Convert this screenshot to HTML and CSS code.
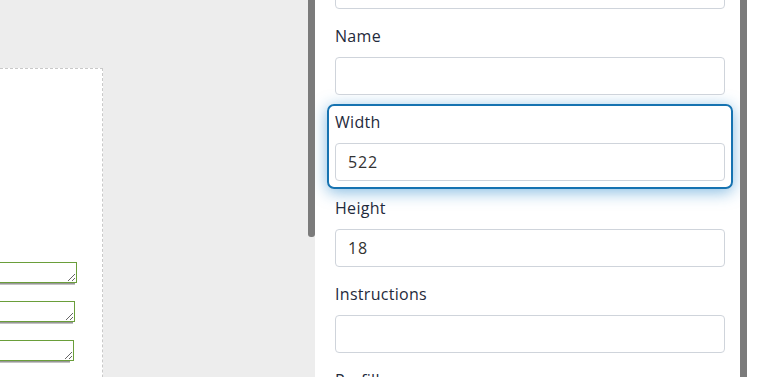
FILE: index.html
```html
<!DOCTYPE html>
<html lang="en">
<head>
    <meta charset="UTF-8">
    <meta name="viewport" content="width=device-width, initial-scale=1.0">
    <title>Form Builder - Field Settings</title>
    <link rel="stylesheet" href="styles.css">
</head>
<body>

    <!-- Canvas -->
    <div class="stage">
        <div class="page">
            <div class="field-row row-1">
                <textarea class="box"></textarea>
                <div class="box-line"></div>
            </div>
            <div class="field-row row-2">
                <textarea class="box"></textarea>
                <div class="box-line"></div>
            </div>
            <div class="field-row row-3">
                <textarea class="box"></textarea>
                <div class="box-line"></div>
            </div>
        </div>
    </div>
    <div class="stage-bar">
        <div class="stage-thumb"></div>
    </div>

    <!-- Settings Panel -->
    <div class="panel">
        <div class="fields">
            <div class="group">
                <label class="label">Label</label>
                <input type="text" class="input" value="">
            </div>
            <div class="group">
                <label class="label">Name</label>
                <input type="text" class="input" value="">
            </div>
            <div class="group active">
                <label class="label">Width</label>
                <input type="text" class="input" value="522">
            </div>
            <div class="group">
                <label class="label">Height</label>
                <input type="text" class="input" value="18">
            </div>
            <div class="group">
                <label class="label">Instructions</label>
                <input type="text" class="input" value="">
            </div>
            <div class="group">
                <label class="label">Prefill</label>
                <input type="text" class="input" value="">
            </div>
        </div>
    </div>
    <div class="panel-bar"></div>
    <div class="rest"></div>

</body>
</html>
```

FILE: styles.css
```css
/* Global Styles */
* {
    margin: 0;
    padding: 0;
    box-sizing: border-box;
}

body {
    font-family: "Open Sans", Arial, sans-serif;
    background-color: #ededed;
    display: flex;
    height: 377px;
    overflow: hidden;
}

/* Canvas */
.stage {
    width: 308px;
    flex: none;
    overflow: hidden;
}

.page {
    margin-top: 68px;
    margin-left: -200px;
    width: 303px;
    height: 400px;
    background-color: #fff;
    border-top: 1px dashed #c9c9c9;
    border-right: 1px dashed #c9c9c9;
    padding-top: 193px;
    display: flex;
    flex-direction: column;
    gap: 16px;
}

.field-row {
    display: flex;
    flex-direction: column;
    align-items: flex-end;
}

.box {
    display: block;
    width: 260px;
    height: 21px;
    border: 1px solid #6a9e3a;
    background-color: #fff;
    outline: none;
}

.box-line {
    width: 250px;
    height: 2px;
    background: linear-gradient(#979797 50%, #c3c3c3 50%);
}

.row-1 .box { margin-right: 25px; }
.row-1 .box-line { margin-right: 27px; }
.row-2 .box { margin-right: 27px; }
.row-2 .box-line { margin-right: 29px; }
.row-3 .box { margin-right: 28px; }
.row-3 .box-line { margin-right: 32px; }

.stage-bar {
    width: 7px;
    flex: none;
}

.stage-thumb {
    height: 237px;
    background-color: #7b7b7b;
    border-radius: 0 0 3px 3px;
}

/* Settings Panel */
.panel {
    width: 425px;
    flex: none;
    background-color: #fff;
    overflow: hidden;
}

.fields {
    margin-top: -68px;
    padding: 0 7px 0 12px;
}

.group {
    border: 2px solid transparent;
    border-radius: 7px;
    padding: 4px 6px 6px 6px;
    margin-bottom: 1px;
    display: flex;
    flex-direction: column;
}

.group.active {
    border-color: #1673b1;
    box-shadow: 0 3px 16px rgba(30, 130, 200, 0.55);
}

.label {
    font-size: 16px;
    line-height: 24px;
    letter-spacing: 0.3px;
    color: #1f2a3c;
    margin-bottom: 9px;
}

.input {
    height: 38px;
    border: 1px solid #cfd4db;
    border-radius: 4px;
    padding: 0 12px;
    font-family: "Open Sans", Arial, sans-serif;
    font-size: 16px;
    letter-spacing: 0.8px;
    color: #333;
    outline: none;
}

.panel-bar {
    width: 7px;
    flex: none;
    background-color: #7b7b7b;
}

.rest {
    flex: 1;
    background-color: #fff;
}
```
